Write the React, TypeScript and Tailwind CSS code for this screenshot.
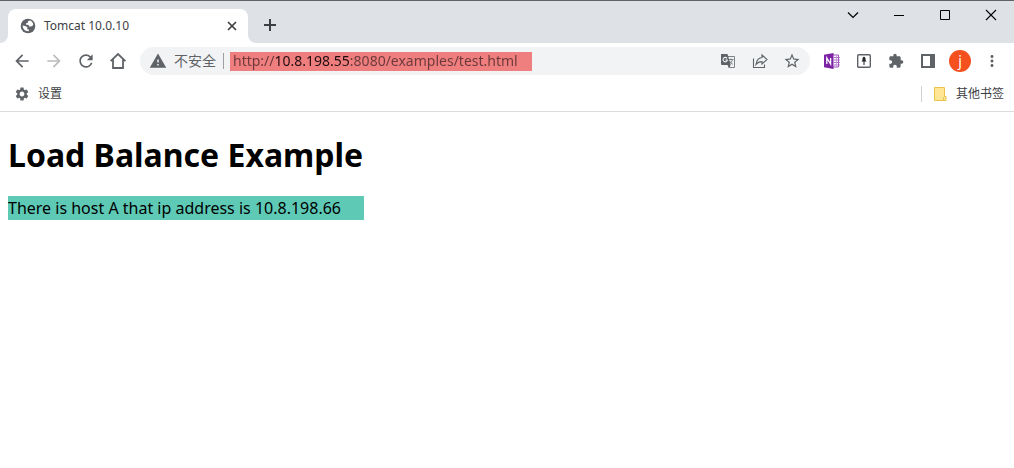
import { useState } from "react";
import type { ReactNode } from "react";
import {
  MdArrowBack,
  MdArrowForward,
  MdExtension,
  MdMoreVert,
  MdRefresh,
  MdSettings,
  MdStarBorder,
  MdWarning,
} from "react-icons/md";

function IconButton({ label, children }: { label: string; children: ReactNode }) {
  return (
    <button type="button" aria-label={label} className="flex size-8 shrink-0 items-center justify-center">
      {children}
    </button>
  );
}

function EarthIcon() {
  return (
    <svg viewBox="0 0 16 16" className="size-4 shrink-0" aria-hidden="true">
      <circle cx="8" cy="8" r="7.3" fill="#5f6368" />
      <path
        d="M9.6 2.6C8 3.3 7.600 4 7.700 5L6.200 5.200C5.600 5.800 6 6.600 6.800 6.800L8.600 7 9.200 8.400 11 8.600 13.200 7.200C13.400 5 12 3 9.600 2.600ZM2.700 7.600L6 8.200 7.600 9.800 7 11.200 9 11.600 8.600 13.300C5.200 13.600 2.600 11 2.700 7.600Z"
        fill="#fff"
      />
    </svg>
  );
}

function TabStrip() {
  return (
    <header className="flex h-[43px] border-t border-[#5f6368] bg-[#dee1e6]">
      <div className="flex w-2 shrink-0 bg-white">
        <div className="h-full w-2 rounded-br-lg bg-[#dee1e6]" />
      </div>
      <div className="flex w-60 bg-[#dee1e6] pt-2">
        <div className="flex flex-1 items-center gap-2 rounded-t-lg bg-white pr-2 pl-3">
          <EarthIcon />
          <span className="flex-1 text-xs text-[#3c4043]">Tomcat 10.0.10</span>
          <button type="button" aria-label="Close tab" className="flex size-4 items-center justify-center">
            <svg viewBox="0 0 16 16" className="size-4" stroke="#3c4043" strokeWidth="1.7">
              <path d="M4 4l8 8M12 4l-8 8" />
            </svg>
          </button>
        </div>
      </div>
      <div className="flex w-2 shrink-0 bg-white">
        <div className="h-full w-2 rounded-bl-lg bg-[#dee1e6]" />
      </div>
      <button type="button" aria-label="New tab" className="mt-2 flex h-8 w-7 items-center justify-center">
        <svg viewBox="0 0 16 16" className="size-4" stroke="#3c4043" strokeWidth="2">
          <path d="M8 2v12M2 8h12" />
        </svg>
      </button>
      <div className="ml-auto flex h-7 text-black">
        <button type="button" aria-label="Search tabs" className="flex w-[46px] items-center justify-center">
          <svg viewBox="0 0 12 12" className="size-3" fill="none" stroke="currentColor" strokeWidth="1.2">
            <path d="M1 3.500l5 5 5-5" />
          </svg>
        </button>
        <button type="button" aria-label="Minimize" className="flex w-[46px] items-center justify-center">
          <svg viewBox="0 0 12 12" className="size-3" fill="none" stroke="currentColor">
            <path d="M1 6.500h10" />
          </svg>
        </button>
        <button type="button" aria-label="Maximize" className="flex w-[46px] items-center justify-center">
          <svg viewBox="0 0 12 12" className="size-3" fill="none" stroke="currentColor">
            <path d="M1.500 1.500h9v9h-9z" />
          </svg>
        </button>
        <button type="button" aria-label="Close" className="flex w-[46px] items-center justify-center">
          <svg viewBox="0 0 12 12" className="size-3" fill="none" stroke="currentColor" strokeWidth="1.1">
            <path d="M1 1l10 10M11 1L1 11" />
          </svg>
        </button>
      </div>
    </header>
  );
}

function AddressBar() {
  const [url, setUrl] = useState("http://10.8.198.55:8080/examples/test.html");
  return (
    <div className="ml-1.5 flex h-7 min-w-0 flex-1 items-center rounded-full bg-[#f1f3f4] pr-0.5 pl-[9px] text-[#5f6368]">
      <MdWarning className="size-[18px] shrink-0" />
      <span className="ml-[7px] shrink-0 text-sm">不安全</span>
      <div className="mr-1.5 ml-[7px] h-4 w-px shrink-0 bg-[#9aa0a6]" />
      <div className="flex h-[19px] w-[302px] items-center bg-[#ef7e7e] pl-[3px]">
        <input
          aria-label="Address"
          value={url}
          onChange={(e) => setUrl(e.target.value)}
          className="w-full bg-[linear-gradient(90deg,#6c383a_43px,#200c10_43px,#200c10_118px,#6c383a_118px)] bg-clip-text text-sm text-transparent outline-none"
        />
      </div>
      <div className="ml-auto flex">
        <IconButton label="Translate this page">
          <svg viewBox="0 0 16 16" className="size-4">
            <path d="M7 3.500h7.500v11H9z" fill="#f1f3f4" stroke="#7d8084" />
            <path d="M8.500 6.500h5M11 5.500v1M12.500 6.500c-.5 2-1.800 3.500-3.500 4.500M9.500 8c.8 1.500 1.800 2.500 3.300 3.300" fill="none" stroke="#7d8084" />
            <path d="M1 1h6.500l3.200 11H2a1 1 0 0 1-1-1z" fill="#5f6368" />
            <path d="M7 5.300A2.200 2.200 0 1 0 7.400 7H5.500" fill="none" stroke="#f1f3f4" strokeWidth="1.100" />
            <path d="M7.500 12h3.200l-1.700 3z" fill="#5f6368" />
          </svg>
        </IconButton>
        <IconButton label="Share this page">
          <svg viewBox="0 0 16 16" className="size-4" fill="none" stroke="currentColor" strokeWidth="1.1">
            <path d="M1.500 5.500v9h11v-3" />
            <path d="M10 2l5 4.500-5 4.500V8.600C7.500 8.600 5.500 9.400 4 11.500 4.400 7.600 6.200 5 10 4.500z" />
          </svg>
        </IconButton>
        <IconButton label="Bookmark this tab">
          <MdStarBorder className="size-[18px]" />
        </IconButton>
      </div>
    </div>
  );
}

function Toolbar() {
  return (
    <nav aria-label="Browser toolbar" className="flex h-9 items-center px-1.5 text-[#5f6368]">
      <IconButton label="Back">
        <MdArrowBack className="size-5" />
      </IconButton>
      <IconButton label="Forward">
        <MdArrowForward className="size-5 text-[#babcbe]" />
      </IconButton>
      <IconButton label="Reload">
        <MdRefresh className="size-5" />
      </IconButton>
      <IconButton label="Home">
        <svg viewBox="0 0 20 20" className="size-5" fill="none" stroke="currentColor" strokeWidth="1.8">
          <path d="M2.600 10.200L10 3l7.400 7.200M5 8.500V17h10V8.500" />
        </svg>
      </IconButton>
      <AddressBar />
      <div className="ml-1.5 flex">
        <IconButton label="OneNote Web Clipper">
          <svg viewBox="0 0 16 16" className="size-4">
            <path d="M8 2h6.500v12H8z" fill="#fff" stroke="#9a50bb" />
            <path d="M10 4.500h5.800M10 7h5.800M10 9.500h5.800M10 12h5.800" stroke="#a765c3" />
            <path d="M12.500 2v12" stroke="#c79bdb" />
            <path d="M0 1.800L9.500 0v16L0 14.200z" fill="#7b23a4" />
            <path d="M2.800 11V5l3.800 6V5" fill="none" stroke="#fff" strokeWidth="1.300" />
          </svg>
        </IconButton>
        <IconButton label="Clip page">
          <svg viewBox="0 0 16 16" className="size-4">
            <rect x="1.700" y="1.700" width="12.600" height="12.600" rx="1" fill="none" stroke="currentColor" strokeWidth="1.400" />
            <path d="M8 3.500L9.500 5v2l1 1.500H8.500V12h-1V8.500h-2L6.500 7V5z" fill="#202124" />
          </svg>
        </IconButton>
        <IconButton label="Extensions">
          <MdExtension className="size-4" />
        </IconButton>
        <IconButton label="Side panel">
          <svg viewBox="0 0 16 16" className="size-4" fill="currentColor">
            <path d="M1 1h14v14H1zM3 3v10h7V3z" fillRule="evenodd" />
          </svg>
        </IconButton>
        <IconButton label="Profile">
          <span className="flex size-[22px] items-center justify-center rounded-full bg-[#f4511e] text-sm text-white">j</span>
        </IconButton>
        <IconButton label="Menu">
          <MdMoreVert className="size-[18px]" />
        </IconButton>
      </div>
    </nav>
  );
}

function BookmarksBar() {
  return (
    <nav aria-label="Bookmarks" className="flex h-[33px] items-center justify-between border-b border-[#dadce0] pr-2.5 pb-[3px] pl-3.5 text-xs text-[#3c4043]">
      <a href="#settings" className="flex items-center gap-2">
        <MdSettings className="size-4 text-[#5f6368]" />
        设置
      </a>
      <div className="flex items-center gap-3">
        <div className="h-4 w-px bg-[#cfd1d4]" />
        <button type="button" className="flex items-center gap-2">
          <svg viewBox="0 0 14 16" className="h-4 w-3.5" fill="#ffe694" stroke="#e8c34c">
            <path d="M.5 1.500h10v13H.5z" />
            <path d="M10.500 10.500h1.500v4h-2.500v-3z" />
          </svg>
          其他书签
        </button>
      </div>
    </nav>
  );
}

export default function App() {
  return (
    <div className="min-h-screen bg-white font-['Noto_Sans','Noto_Sans_CJK_SC',sans-serif]">
      <TabStrip />
      <Toolbar />
      <BookmarksBar />
      <main className="px-2 pt-5 text-black">
        <h1 className="text-[32px] leading-[46px] font-bold">Load Balance Example</h1>
        <p className="mt-[18px] w-fit bg-[#5ecab6] pr-[23px] text-base leading-6">
          There is host A that ip address is 10.8.198.66
        </p>
      </main>
    </div>
  );
}
